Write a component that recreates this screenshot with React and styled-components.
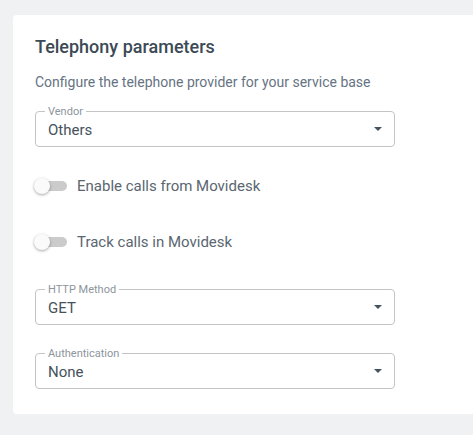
import React from 'react';
import styled, { createGlobalStyle } from 'styled-components';

const GlobalStyle = createGlobalStyle`
  html, body {
    margin: 0;
    padding: 0;
    background: #f0f1f3;
    font-family: Roboto, "Liberation Sans", sans-serif;
  }
`;

const Page = styled.div`
  padding: 15px 0 21px 13px;
  min-height: 435px;
  box-sizing: border-box;
`;

const Card = styled.section`
  background: #ffffff;
  border-radius: 4px 0 0 4px;
  padding: 20px 78px 25px 22px;
  display: flex;
  flex-direction: column;
`;

const Title = styled.h2`
  margin: 0;
  font-size: 18px;
  font-weight: 500;
  line-height: 24px;
  color: #3c4a55;
`;

const Subtitle = styled.p`
  margin: 13px 0 0;
  font-size: 14px;
  line-height: 20px;
  color: #667383;
`;

const Field = styled.div`
  position: relative;
  margin-top: ${p => p.$top}px;
  padding: 0 12px;
  height: 36px;
  box-sizing: border-box;
  border: 1px solid #c4c4c4;
  border-radius: 4px;
  display: flex;
  align-items: center;
`;

const FieldLabel = styled.span`
  position: absolute;
  left: 9px;
  top: -6px;
  padding: 0 3px;
  background: #ffffff;
  font-size: 11px;
  line-height: 11px;
  color: #8d959d;
`;

const Value = styled.span`
  flex: 1;
  font-size: 15px;
  line-height: 18px;
  color: #45525c;
  margin-top: 1px;
`;

const Caret = styled.span`
  width: 0;
  height: 0;
  border-left: 4px solid transparent;
  border-right: 4px solid transparent;
  border-top: 4px solid #45535e;
`;

const ToggleRow = styled.label`
  display: flex;
  align-items: center;
  gap: 10px;
  height: 18px;
  margin-top: ${p => p.$top}px;
  font-size: 15px;
  color: #5a6670;
`;

const Track = styled.span`
  position: relative;
  width: 30px;
  height: 10px;
  margin-left: 2px;
  border-radius: 5px;
  background: #cbcbcb;
`;

const Thumb = styled.span`
  position: absolute;
  left: -3px;
  top: -3px;
  width: 16px;
  height: 16px;
  border-radius: 50%;
  background: #fafafa;
  box-shadow: 0 1px 3px rgba(0, 0, 0, 0.35);
`;

const Select = ({ label, value, top }) => (
  <Field $top={top}>
    <FieldLabel>{label}</FieldLabel>
    <Value>{value}</Value>
    <Caret />
  </Field>
);

const Toggle = ({ label, top }) => (
  <ToggleRow $top={top}>
    <Track>
      <Thumb />
    </Track>
    {label}
  </ToggleRow>
);

export default function App() {
  return (
    <>
      <GlobalStyle />
      <Page>
        <Card>
          <Title>Telephony parameters</Title>
          <Subtitle>Configure the telephone provider for your service base</Subtitle>
          <Select label="Vendor" value="Others" top={19} />
          <Toggle label="Enable calls from Movidesk" top={30} />
          <Toggle label="Track calls in Movidesk" top={38} />
          <Select label="HTTP Method" value="GET" top={38} />
          <Select label="Authentication" value="None" top={28} />
        </Card>
      </Page>
    </>
  );
}
